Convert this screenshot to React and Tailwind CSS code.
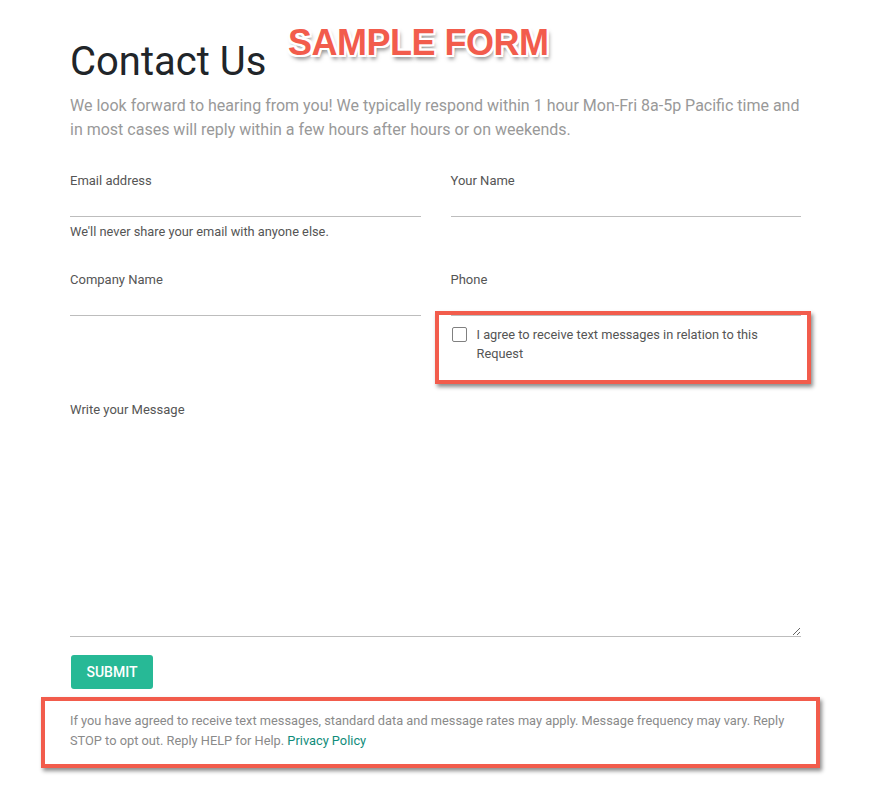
import React from 'react';

function Field({ label, help, className = '' }) {
    return (
        <div className={'flex flex-col ' + className}>
            <label className="text-[13px] leading-5 text-[#555]">{label}</label>
            <input type="text" className="h-[26px] w-full border-b border-[#bdbdbd] bg-transparent outline-none" />
            {help && <p className="mt-[6px] text-[12.8px] leading-[18px] text-[#555]">{help}</p>}
        </div>
    );
}

function Callout({ className }) {
    return (
        <div
            className={
                'pointer-events-none absolute border-4 border-[#f25c4c] shadow-[2px_3px_4px_rgba(0,0,0,0.45)] ' +
                className
            }
        />
    );
}

export default function App() {
    return (
        <div className="min-h-screen bg-white font-['Roboto','Liberation_Sans',sans-serif]">
            <div className="relative ml-[70px] w-[731px] pt-[38px] pb-10">
                <span className="absolute left-[218px] top-[16px] font-['Liberation_Sans',sans-serif] text-[36px] font-bold tracking-[-0.5px] text-[#f25c4c] [text-shadow:2px_0_0_#fff,-2px_0_0_#fff,0_2px_0_#fff,0_-2px_0_#fff,2px_2px_0_#fff,-2px_-2px_0_#fff,2px_-2px_0_#fff,-2px_2px_0_#fff,2px_4px_4px_rgba(0,0,0,0.5)]">
                    SAMPLE FORM
                </span>

                <h1 className="text-[40px] leading-[48px] font-normal text-[#212529]">Contact Us</h1>
                <p className="mt-[8px] text-[16px] leading-6 text-[#999]">
                    We look forward to hearing from you! We typically respond within 1 hour Mon-Fri 8a-5p Pacific time and
                    in most cases will reply within a few hours after hours or on weekends.
                </p>

                <form className="mt-[29px]">
                    <div className="grid grid-cols-2 gap-x-[30px]">
                        <Field label="Email address" help="We'll never share your email with anyone else." />
                        <Field label="Your Name" />
                    </div>

                    <div className="mt-[29px] grid grid-cols-2 gap-x-[30px]">
                        <Field label="Company Name" />
                        <div className="flex flex-col">
                            <Field label="Phone" />
                            <div className="relative mt-[9px] flex items-start gap-[10px] pl-px">
                                <Callout className="-left-[16px] -right-[10px] -top-[14px] -bottom-[21px]" />
                                <span className="mt-[2px] h-[15px] w-[15px] shrink-0 rounded-[2px] border-[1.5px] border-[#808080] bg-white" />
                                <span className="text-[12.8px] leading-[19px] text-[#555]">
                                    I agree to receive text messages in relation to this Request
                                </span>
                            </div>
                        </div>
                    </div>

                    <div className="mt-[37px] flex flex-col">
                        <label className="text-[13px] leading-5 text-[#555]">Write your Message</label>
                        <textarea className="h-[217px] w-full resize-y border-b border-[#bdbdbd] bg-transparent outline-none" />
                    </div>

                    <button
                        type="button"
                        className="mt-[18px] ml-px h-[34px] w-[82px] rounded-[3px] bg-[#27b996] text-[14px] font-medium text-white"
                    >
                        SUBMIT
                    </button>

                    <div className="relative mt-[22px]">
                        <Callout className="-left-[29px] -right-[19px] -top-[14px] -bottom-[17px]" />
                        <p className="text-[12.8px] leading-5 text-[#8a8a8a]">
                            If you have agreed to receive text messages, standard data and message rates may apply. Message
                            frequency may vary. Reply STOP to opt out. Reply HELP for Help.{' '}
                            <a href="#" className="text-[#0f8c7a]">Privacy Policy</a>
                        </p>
                    </div>
                </form>
            </div>
        </div>
    );
}
